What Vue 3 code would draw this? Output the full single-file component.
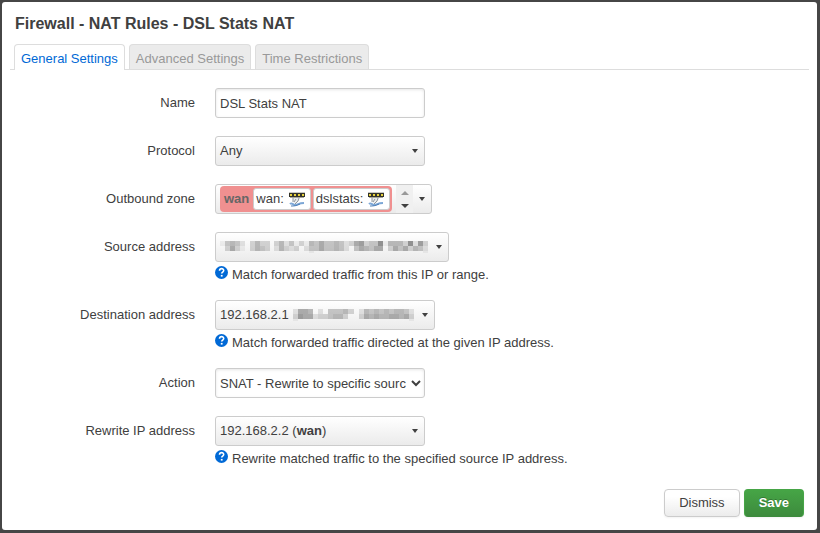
<script setup>
import { ref } from 'vue'

const tabs = ['General Settings', 'Advanced Settings', 'Time Restrictions']
const active = ref(0)
const name = ref('DSL Stats NAT')
const action = ref('snat')
const zones = ['wan:', 'dslstats:']

// Grey levels of the redacted address blocks, 0 is blank and 9 is darkest
const shade = (rows) =>
  rows.flatMap((row, y) =>
    [...row].map((c, x) => ({ x, y, o: Number(c) / 14 })).filter((p) => p.o > 0)
  )
const sourceMask = shade([
  '145420353303524131546445423673448155538273',
  '036310354302532302446445420465466036463542',
  '000000000000000000100000000000000000000001'
])
const destMask = shade([
  '266502044453025454545542',
  '376623345530036565566563',
  '100000000000000000000001'
])
</script>

<template>
  <div class="screen">
    <main class="dialog">
      <h1>Firewall - NAT Rules - DSL Stats NAT</h1>
      <nav class="tabs">
        <a
          v-for="(t, i) in tabs"
          :key="t"
          href="#"
          :class="{ active: i === active }"
          @click.prevent="active = i"
        >{{ t }}</a>
      </nav>

      <form @submit.prevent>
        <div class="row">
          <label for="name">Name</label>
          <div class="field"><input id="name" v-model="name" class="control" type="text"></div>
        </div>
        <div class="row">
          <label for="protocol">Protocol</label>
          <div class="field">
            <button id="protocol" type="button" class="control drop"><span>Any</span><i class="caret"></i></button>
          </div>
        </div>
        <div class="row">
          <label for="zone">Outbound zone</label>
          <div class="field">
            <button id="zone" type="button" class="control drop zone">
              <span class="badge">
                <strong>wan</strong>
                <span v-for="z in zones" :key="z" class="iface">
                  {{ z }}
                  <svg width="18" height="16" viewBox="0 0 18 16">
                    <path d="M1 1h16v5h-1v1H2V6H1z" fill="#c9c9c2" />
                    <path d="M1 2h16v4H1z" fill="#33332a" />
                    <path d="M2 3h2v2H2zM6 3h2v2H6zM10 3h2v2h-2zM14 3h2v2h-2z" fill="#e8d23c" />
                    <path d="M2 6h14v1H2z" fill="#a5a59c" />
                    <path d="M5 7h7l-1 3-3 3-3-2z" fill="#e9ebec" />
                    <path d="M5 7v4M11 7l-1 3-3 3M8 8l-2 3" fill="none" stroke="#8f979c" />
                    <path d="M2 13c2-2 3 1 5 1s4-2 9-2" fill="none" stroke="#7da7d6" stroke-width="2" />
                    <path d="M3 15c3 0 5 0 9-2" fill="none" stroke="#4c7fb8" />
                  </svg>
                </span>
              </span>
              <span class="more"><i class="up"></i><i class="down"></i></span>
              <i class="caret"></i>
            </button>
          </div>
        </div>
        <div class="row">
          <label for="source">Source address</label>
          <div class="field">
            <button id="source" type="button" class="control drop fit">
              <svg class="mask" width="208" height="12" viewBox="0 0 42 12" preserveAspectRatio="none" shape-rendering="crispEdges">
                <rect v-for="(p, i) in sourceMask" :key="i" :x="p.x" :y="p.y * 5" width="1" :height="p.y === 2 ? 2 : 5" fill="#444" :fill-opacity="p.o" />
              </svg>
              <i class="caret"></i>
            </button>
            <p class="help">
              <svg width="13" height="13" viewBox="0 0 13 13"><circle cx="6.500" cy="6.500" r="6.500" fill="#0069d6" /><path d="M4.500 4.700c.2-2.800 4.200-2.700 4.200-.2 0 1.500-2 1.600-2 3" fill="none" stroke="#fff" stroke-width="1.600" /><path d="M5.800 8.900h1.800v1.700H5.800z" fill="#fff" /></svg>
              Match forwarded traffic from this IP or range.
            </p>
          </div>
        </div>
        <div class="row">
          <label for="dest">Destination address</label>
          <div class="field">
            <button id="dest" type="button" class="control drop fit">
              <span>192.168.2.1</span>
              <svg class="mask gap" width="121" height="12" viewBox="0 0 24 12" preserveAspectRatio="none" shape-rendering="crispEdges">
                <rect v-for="(p, i) in destMask" :key="i" :x="p.x" :y="p.y * 5" width="1" :height="p.y === 2 ? 2 : 5" fill="#444" :fill-opacity="p.o" />
              </svg>
              <i class="caret"></i>
            </button>
            <p class="help">
              <svg width="13" height="13" viewBox="0 0 13 13"><circle cx="6.500" cy="6.500" r="6.500" fill="#0069d6" /><path d="M4.500 4.700c.2-2.800 4.200-2.700 4.200-.2 0 1.500-2 1.600-2 3" fill="none" stroke="#fff" stroke-width="1.600" /><path d="M5.800 8.900h1.800v1.700H5.800z" fill="#fff" /></svg>
              Match forwarded traffic directed at the given IP address.
            </p>
          </div>
        </div>
        <div class="row">
          <label for="action">Action</label>
          <div class="field">
            <select id="action" v-model="action" class="control">
              <option value="snat">SNAT - Rewrite to specific source IP or port</option>
              <option value="masq">MASQUERADE - Automatically rewrite</option>
            </select>
          </div>
        </div>
        <div class="row">
          <label for="rewrite">Rewrite IP address</label>
          <div class="field">
            <button id="rewrite" type="button" class="control drop"><span>192.168.2.2 (<strong>wan</strong>)</span><i class="caret"></i></button>
            <p class="help">
              <svg width="13" height="13" viewBox="0 0 13 13"><circle cx="6.500" cy="6.500" r="6.500" fill="#0069d6" /><path d="M4.500 4.700c.2-2.800 4.200-2.700 4.200-.2 0 1.500-2 1.600-2 3" fill="none" stroke="#fff" stroke-width="1.600" /><path d="M5.800 8.900h1.800v1.700H5.800z" fill="#fff" /></svg>
              Rewrite matched traffic to the specified source IP address.
            </p>
          </div>
        </div>
        <footer>
          <button type="button" class="btn">Dismiss</button>
          <button type="submit" class="btn save">Save</button>
        </footer>
      </form>
    </main>
  </div>
</template>

<style>
body { margin: 0; background: #464646; }
</style>

<style scoped>
.screen {
  box-sizing: border-box;
  min-height: 100vh;
  padding: 2px 3px 3px 2px;
  background: #464646;
  color: #404040;
  font: 13px/18px "Liberation Sans", Arial, sans-serif;
}
.dialog {
  box-sizing: border-box;
  min-height: calc(100vh - 5px);
  padding: 13px 8px;
  background: #fff;
  border-radius: 3px;
}
h1 { margin: 0 5px 11px; font-size: 16px; line-height: 18px; }
.tabs { display: flex; gap: 4px; padding: 0 4px; border-bottom: 1px solid #ddd; }
.tabs a {
  padding: 5px 6px 1px;
  border: 1px solid #ddd;
  border-bottom: 0;
  border-radius: 4px 4px 0 0;
  background: #ebebeb;
  color: #999;
  text-decoration: none;
}
.tabs a.active { margin-bottom: -1px; background: #fff; color: #0069d6; }
form { padding-top: 18px; }
.row { display: flex; gap: 20px; margin-bottom: 18px; }
.row > label { flex: 0 0 185px; padding-top: 6px; text-align: right; }
.field { flex: 1; min-width: 0; }
.control {
  display: flex;
  align-items: center;
  box-sizing: border-box;
  width: 210px;
  height: 30px;
  padding: 0 4px;
  border: 1px solid #ccc;
  border-radius: 3px;
  background: #fff;
  color: #404040;
  font: inherit;
}
input.control, select.control { box-shadow: inset 0 1px 3px rgba(0, 0, 0, 0.1); }
select.control { padding: 0 2px 0 0; }
.drop { justify-content: space-between; background: linear-gradient(#fff, #ebebeb); }
.fit { width: max-content; gap: 8px; }
.caret {
  flex: none;
  margin-right: 2px;
  border: 3px solid transparent;
  border-top: 4px solid #404040;
  border-bottom: 0;
}
.zone { width: max-content; }
.badge {
  display: flex;
  align-items: center;
  gap: 2px;
  height: 26px;
  box-sizing: border-box;
  padding: 0 2px 0 4px;
  border-radius: 4px;
  background: #f09090;
}
.badge strong { margin-right: 2px; color: #666; }
.iface {
  display: flex;
  align-items: center;
  gap: 4px;
  height: 20px;
  padding: 0 4px 0 2px;
  border: 1px solid #ccc;
  border-radius: 3px;
  background: #fff;
}
.more {
  display: flex;
  flex-direction: column;
  justify-content: center;
  align-items: center;
  gap: 9px;
  width: 17px;
  height: 28px;
  margin: 0 6px 0 4px;
  background: #f0f0f0;
}
.up { border: 4px solid transparent; border-top: 0; border-bottom: 4px solid #999; }
.down { border: 4px solid transparent; border-bottom: 0; border-top: 4px solid #404040; }
.mask { display: block; }
.gap { margin-left: -4px; }
.help {
  display: flex;
  gap: 4px;
  margin: 3px 0 -1px;
  padding-top: 1px;
  line-height: 17px;
}
.help svg { flex: none; }
footer { display: flex; justify-content: flex-end; gap: 4px; padding: 5px 5px 0; }
.btn {
  box-sizing: border-box;
  height: 28px;
  padding: 0 14px;
  border: 1px solid #ccc;
  border-radius: 4px;
  background: linear-gradient(#fff, #fff 25%, #ececec);
  color: #404040;
  font: inherit;
  box-shadow: 0 1px 2px rgba(0, 0, 0, 0.05);
}
.save {
  border-color: #46a546 #46a546 #3d8b3d;
  background: linear-gradient(#46a546, #3d8b3d);
  color: #fff;
  font-weight: bold;
  text-shadow: 0 -1px 0 rgba(0, 0, 0, 0.25);
}
</style>
